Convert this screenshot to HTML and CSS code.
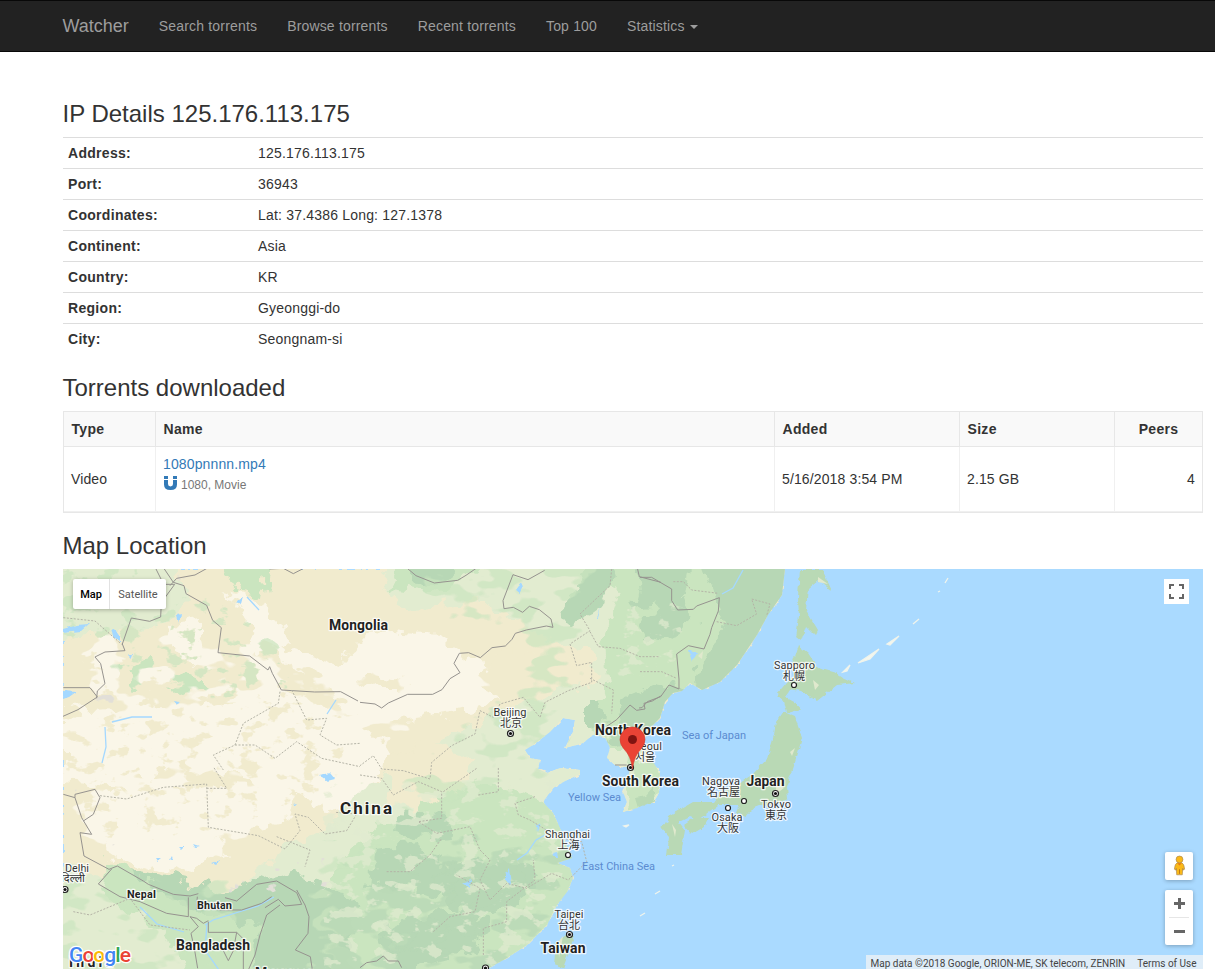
FILE: index.html
```html
<!DOCTYPE html>
<html lang="en">
<head>
<meta charset="utf-8">
<title>Watcher - IP Details</title>
<link rel="stylesheet" href="styles.css">
</head>
<body>
<nav class="navbar">
  <a class="brand">Watcher</a>
  <a class="nav-link">Search torrents</a>
  <a class="nav-link">Browse torrents</a>
  <a class="nav-link">Recent torrents</a>
  <a class="nav-link">Top 100</a>
  <a class="nav-link">Statistics <span class="caret"></span></a>
</nav>
<main class="container">
  <h3>IP Details 125.176.113.175</h3>
  <dl class="details">
    <div><dt>Address:</dt><dd>125.176.113.175</dd></div>
    <div><dt>Port:</dt><dd>36943</dd></div>
    <div><dt>Coordinates:</dt><dd>Lat: 37.4386 Long: 127.1378</dd></div>
    <div><dt>Continent:</dt><dd>Asia</dd></div>
    <div><dt>Country:</dt><dd>KR</dd></div>
    <div><dt>Region:</dt><dd>Gyeonggi-do</dd></div>
    <div><dt>City:</dt><dd>Seongnam-si</dd></div>
  </dl>
  <h3>Torrents downloaded</h3>
  <div class="torrents">
    <div class="row head"><span>Type</span><span>Name</span><span>Added</span><span>Size</span><span class="peers">Peers</span></div>
    <div class="row body">
      <span>Video</span>
      <div class="file">
        <a>1080pnnnn.mp4</a>
        <small><svg class="magnet" viewBox="0 0 13 14"><path d="M0 0h4v3H0zM9 0h4v3H9zM0 4h4v4q0 2.4 2.5 2.4T9 8V4h4v4.500q0 5.500-6.500 5.500T0 8.500z" fill="#337ab7"/></svg>1080, Movie</small>
      </div>
      <span>5/16/2018 3:54 PM</span><span>2.15 GB</span><span class="count">4</span>
    </div>
  </div>
  <h3>Map Location</h3>
  <section class="map">
    <svg class="canvas" viewBox="63 569 1140 400">
      <defs>
        <filter id="rough" x="-5%" y="-5%" width="110%" height="110%"><feTurbulence type="fractalNoise" baseFrequency=".06" numOctaves="3" seed="4"/><feDisplacementMap in="SourceGraphic" scale="26" xChannelSelector="R" yChannelSelector="G"/></filter>
        <filter id="coast" x="-5%" y="-5%" width="110%" height="110%"><feTurbulence type="fractalNoise" baseFrequency=".16" numOctaves="2" seed="8"/><feDisplacementMap in="SourceGraphic" scale="5" xChannelSelector="R" yChannelSelector="G"/></filter>
        <filter id="blotch" x="0" y="0" width="100%" height="100%"><feGaussianBlur in="SourceAlpha" stdDeviation="14" result="soft"/><feTurbulence type="fractalNoise" baseFrequency=".025 .045" numOctaves="3" seed="11"/><feComposite in2="soft" operator="arithmetic" k2="1" k3=".4"/><feColorMatrix values="0 0 0 0 0  0 0 0 0 0  0 0 0 0 0  0 0 0 18 -16.400"/><feComposite in="SourceGraphic" operator="in"/></filter>
        <filter id="fleck" x="0" y="0" width="100%" height="100%"><feGaussianBlur in="SourceAlpha" stdDeviation="6" result="soft"/><feTurbulence type="fractalNoise" baseFrequency=".05 .075" numOctaves="4" seed="23"/><feComposite in2="soft" operator="arithmetic" k2="1" k3=".35"/><feColorMatrix values="0 0 0 0 0  0 0 0 0 0  0 0 0 0 0  0 0 0 14 -13"/><feComposite in="SourceGraphic" operator="in"/></filter>
        <path id="mainland" d="M63 569H785L782 595 768 615 757 635 737 665 720 682 702 690 690 683 682 691 673 693 665 702 660 718 650 728 642 742 650 757 660 773 659 793 653 803 645 803 637 808 623 812 627 802 623 792 628 778 630 768 615 765 607 758 610 748 605 737 593 735 583 743 565 748 573 732 575 720 563 718 550 732 533 745 525 750 530 758 540 760 538 769 547 773 560 768 580 770 580 774 567 780 553 788 543 802 553 813 560 828 567 848 572 858 557 863 570 868 573 878 567 892 557 905 547 925 527 945 507 958 487 969H63Z"/>
        <clipPath id="land"><use href="#mainland"/></clipPath>
      </defs>
      <path class="sea" d="M63 569H1203V969H63Z"/>
      <g filter="url(#coast)"><use href="#mainland" class="sand"/></g>
      <g clip-path="url(#land)">
        <g filter="url(#rough)">
          <path class="cream" d="M172 625l28-4 8 32-14 12-25-15zM225 590l35 10 30 40-30 15-10-30zM255 640l60 15 55 20 38 20-30 3-80-22zM370 630l70 4 20 20 35 15 5 30-30 10-60 10-60-5-30-30zM63 712l100-4 85-10 40-10 70 35 30 20-15 60-50 5-50-25-100-18-50 22-60-5zM90 795l60-5 90-5 50 8-5 30-60 15-60 5-50-10zM100 835l60-12 50 10 20 20-60 22-60-20z"/>
          <path class="pale" d="M420 556H800V990H380L300 970 240 890 290 840 330 830 360 790 410 760 450 735 500 715 540 690 580 680 590 650 530 630 480 600 400 610 380 569zM50 855l120 55 80 30 60 50H50zM50 559h113l30 40-20 20-60 15-63 5z"/>
          <path class="sand" d="M500 650l60 10 40 18-50 17-40 10-35-20zM385 760l50-20 40 20-20 55-25 5-40-20zM375 675l35 5 0 12-30 0-20-10z"/>
          <path class="green" d="M400 560h90l-50 36-50-6zM580 560h220v190H610l-25-28 25-35-5-50 15-45zM340 860l45-40 80-10 80-12 40 80-70 110H330l-20-70zM425 805l65-22 70 20 20 50-50 60-70-20-40-40zM110 860l80 40 90 20 60-35 35 100H200l-40-60-60-30zM225 560h45l-5 36-30-5zM110 665l40-5 25 20-40 8zM130 672l60 5 25 12-30 8zM635 740l28 35-10 35-30 5z"/>
          <path class="wood" d="M410 560h60l-35 26-25-3zM560 615l30-55h28l-16 45-36 26zM640 560h50l-5 31-20 13-32 5zM700 560h105l-40 84-50 58-25-15 35-60zM660 600l25-5 10 25-30 20-25-5zM620 700l35-15 40 8-30 45-35-10zM585 705l20 0-3 18-17 5zM245 883l50-15 60 35-5 80H250l10-58-50-10zM395 815l55 2 3 18-40 2-20-5zM372 848l50-5 20 20 30 7-35 30-40-15-30 5zM445 865l60-5 40 10-20 30-60 20-20-20zM380 930l60-20 50 10-10 30-50 10-40 20zM130 870l90 20 60 20-5 10-90-12zM640 690l25 7-40 50-20-5z"/>
        </g>
        <path class="cream" filter="url(#blotch)" d="M80 620H190L350 660 480 640 510 700 350 760 350 790 240 850 63 850Z"/>
        <path class="sand" filter="url(#fleck)" d="M40 640L200 610 350 680V780L200 840H40Z"/>
        <path class="green faint" filter="url(#blotch)" d="M390 540H600L590 700 540 800 450 820 370 800 470 710 520 650 400 600ZM40 870H240V999H40ZM300 840H420V999H300Z"/>
        <path class="green faint" filter="url(#fleck)" d="M50 560H150L280 640 310 690 200 700 110 650 50 640Z"/>
        <path class="wood faint" filter="url(#blotch)" d="M340 850L590 820V999H300Z"/>
        <path class="pale faint" filter="url(#fleck)" d="M320 780H570V969H320ZM620 600H700L670 680H610Z"/>
        <path class="rock" filter="url(#fleck)" d="M90 692H120V706H90ZM160 560H190V585H160ZM63 785L75 790 90 840 150 870 230 895 280 895 300 870 280 860 240 890 150 862 105 840 80 785ZM290 845H330V895H290ZM235 870H265V890H235Z"/>
      </g>
      <g class="island" filter="url(#coast)">
        <path d="M800 569h22l10 22-14-11-10 8-2 22 12 20-3 6-9-9-5 14-5-4 3-20-1-20zM798 645l10 8 10 15 18 5 6 4 13 6-18 2-20 16-17-10-9-2-6 8 11 6 5 6-14 4-3-12-7-6 10-12 7-8-3-8zM783 712l12 5 7 21-8 28-7 21 1 12-15 6-14 0-5 2-8 10-10-4 3-8-21 0-20 15-8-3-12 6-11 2 2-9 24-14 21 0 8-11 12-4 18-12 15-16 7-24 2-13zM684 825l10-7 15 0-5 9-12 7zM676 818l9 12-4 25-14 0 2-18-9-10 8-5z"/>
        <path d="M571 931l3 8-11 29-9-3 2-22zM635 798l10-2 9-10 0 15-16 7z"/>
      </g>
      <g class="valley"><path d="M818 577l10 7-10-2zM813 680l6 5-4 5zM672 824l4 6-1 7zM790 752l5-4-3 8zM776 784l8 4-8 6zM698 656l5-5-1 8zM558 942l5-6-4 22z"/></g>
      <path class="islets" d="M843 672l7-7-3 6zM858 663l21-14-9 10zM887 644l12-8-9 9zM913 624l6-5zM624 826l5-1-3 2zM640 916l5-3zM655 894l5-3zM945 583l3-5zM938 592l2-1zM672 866l2-1z"/>
      <g class="water" filter="url(#coast)"><path d="M63 629l14-4 12-1-8 7-18 2zM111 628l9 6 0 9-7-6zM63 691l13 1-7 5-6 2zM236 602l7-6-2 8zM177 616l4-1-2 8zM173 700l8 1-5 3zM516 590l5-7 3 3-4 7zM596 618l4-12-3 12zM689 651l8 2-5 8zM319 775l11-2 5 6-8 2zM211 863l9-3-5 5zM155 858l6 0-4 3zM169 860l3-5 1 4zM178 847l6 0-3 3zM193 844l6 2-4 1zM292 804l6-1-3 3zM128 655l4 0-1 3zM536 826l4-4-3 10zM553 853l4-1 1 5-4 0zM506 872l3-4 2 17-5-2zM463 883l8-3-1 8z"/></g>
      <g class="river"><path d="M205 925l8-5 45-14 16-9M207 924l-2 26 14 20M140 907l17 17 27 8M336 700l-9 14M247 597l12 13M722 594l11-6 10-18M510 885l-4-13M545 835l-9 5-9 13-10 7M105 727l1 20-4 16M112 722l20-5 20 0"/></g>
      <g class="borders">
        <g transform="translate(60 565) scale(.33333)"><path d="M10 368l80 0 22 28-58 38-45 20M110 400l2-22 23-22-13-60-17-20 30-15 60-4-8-20 27-78 55 10 33-13 2-43 40-55-33 0-25-50M305 0l35 52 32 10 6 24 62 35 18 45 26 22-10 75 95 10 55 42 5-10 8 20 27 50 100 6 78-1 52 28M330 62l20-22 55-10 45-25M605 0l25 12 40-2 30 16 35-18"/></g>
        <g transform="translate(360 565) scale(.33333)"><path d="M0 412l45 5 20 12 20-15 58-26 75 0 28-14 24-33 30-18-18-28 16-30 28-2 35 15 35-30 40-5 20-20 10-18 33-10 60-12 20 4-6-25-35-28-30-10-20 18-28-15-28 4-3-24 30-78 45 15 50-28M130 0l38 32 55 22 70-8 25-15 45-31M830 0l8 35 65 17M740 484l30-20 40-44 20 16 25-4-3-17 25-7 25-15M765 600l35 0"/></g>
        <g transform="translate(640 565) scale(.33333)"><path d="M0 37h35l60 35 0 35 18 28 47-2 10-10 68-25-3 40-20 50-5 20-18 44-47-10-35 25 7 75 0 30-30-12-25 35-40 15-16 18-9 1"/></g>
        <g transform="translate(60 765) scale(.33333)"><path d="M10 88l35 10 20 60 30 50-35-5 12 70 75 40 25-10 78 45 15 10 75 30 50 5 25-7M155 312l-40 45 65 38 60 15 80 35 65 10 0-58M425 430l60 5 60 0 60-20 30-20M412 395l-3 40M390 455l20 5 20 15 15-8M390 455l25 30-22 20 10 45 10 60M445 470v32l85 0-10 55-15 30-15-30M530 502l20 20 0 90M660 420l-40 30-20 60-15 60-20 45M495 398l35 10 60-50 60-10 60 35 15 35-50 5-20-20-40 25M710 375l25 45 12 35-3 50-38 50 45 20 10 65M45 98l0-10 60-15 15 25-20 50-30 20"/></g>
        <g transform="translate(360 765) scale(.33333)"><path d="M0 608l20-15 30-5 20-15 15 15 30 0 10 20"/></g>
      </g>
      <g class="provinces">
        <g transform="translate(60 565) scale(.33333)"><path d="M10 158l95 10 80 70M660 380l-5 35-105 60-25 65-65 30 30 45M695 375l45 90 60-5-20 50 50 30 70-5M525 540l60 0 60 40 65-50 75 50 115 25"/></g>
        <g transform="translate(360 565) scale(.33333)"><path d="M755 12l-5 50-90 85 30 50-60 40 20 65 45-10 0 60-70 25-70 35-15 45-50-60-70 20-20 40-40-20-15 70-70 35-60 50-5 50-80-25-65-5-25-40-40 30M690 200l25 45 65 5 60 25 60 0M690 340l70 35-5 70"/></g>
        <g transform="translate(640 565) scale(.33333)"><path d="M100 50l30 0 25 25 80 10M230 170l60 12 60-35-15-45 55 15-10 35M0 320l65 0 45 20"/></g>
        <g transform="translate(60 765) scale(.33333)"><path d="M120 92l80 10 110-35 130-10 5 130 150 25 80 40 45-55-15-50 40 10 50 50 65-10 30-50-65-5M440 70l60 0-40-65M650 215l100 40-15 50M40 440l50 10 120-50 60 80 120 15"/></g>
        <g transform="translate(360 765) scale(.33333)"><path d="M0 30l65 10 35 50 75-40 70 30 0 80-70 10 55 35 100-20 30 70 30 30-30 60 30 60 50-50 60 15 75-45 50 20 55-55-15-60-65-10-90-55-35-15-10-35 60-20M80 320l70 0 60-50 35-50M220 500l50-45 75-15 15-70-70-40M370 570l0-80 70-20 0-60 85-65-5-60M250 80l100-70M355 90l60-10 0-75"/></g>
      </g>
      <g class="dots"><circle cx="794" cy="685" r="2.500"/><circle cx="744" cy="801" r="2.500"/><circle cx="728" cy="808" r="2.500"/><circle cx="568" cy="855" r="2.500"/><circle cx="510.500" cy="733.500" r="3"/><circle cx="630.500" cy="767.500" r="3"/><circle cx="775.500" cy="793.500" r="3"/><circle cx="569.500" cy="934.500" r="3"/><circle cx="485.500" cy="968" r="3"/><circle cx="65" cy="889.500" r="3"/></g>
      <g class="cores"><circle cx="510.500" cy="733.500" r="1.600"/><circle cx="630.500" cy="767.500" r="1.600"/><circle cx="775.500" cy="793.500" r="1.600"/><circle cx="569.500" cy="934.500" r="1.600"/><circle cx="485.500" cy="968" r="1.600"/><circle cx="65" cy="889.500" r="1.600"/></g>
      <g class="country">
        <text x="358.500" y="630" textLength="59">Mongolia</text><text class="china" x="366" y="814" textLength="52">China</text>
        <text x="633" y="735" textLength="76">North Korea</text><text x="640.500" y="786" textLength="77">South Korea</text><text x="765.500" y="786" textLength="38">Japan</text>
        <text x="563" y="953" textLength="45">Taiwan</text><text x="213" y="950" textLength="74">Bangladesh</text>
        <text class="minor" x="141.500" y="898" textLength="29">Nepal</text><text class="minor" x="214.500" y="909" textLength="35">Bhutan</text>
        <text x="91" y="967" textLength="44">India</text><text x="284" y="978" textLength="58">Myanmar</text>
      </g>
      <g class="city">
        <text x="510" y="716" textLength="33">Beijing</text><text class="cjk" x="511" y="727">北京</text>
        <text x="794.500" y="669" textLength="41">Sapporo</text><text class="cjk" x="794" y="680">札幌</text>
        <text x="721" y="785" textLength="38">Nagoya</text><text class="cjk" x="723.500" y="796">名古屋</text>
        <text x="727" y="821" textLength="31">Osaka</text><text class="cjk" x="728" y="832">大阪</text>
        <text x="776" y="808" textLength="30">Tokyo</text><text class="cjk" x="776" y="819">東京</text>
        <text x="567.500" y="838" textLength="45">Shanghai</text><text class="cjk" x="568.500" y="849">上海</text>
        <text x="569" y="918" textLength="29">Taipei</text><text class="cjk" x="569" y="929">台北</text>
        <text x="648" y="750" textLength="28">Seoul</text><text class="cjk" x="645" y="761">서울</text>
        <text x="77" y="872" textLength="24">Delhi</text><text x="73" y="882">दिल्ली</text>
      </g>
      <g class="seas"><text x="714" y="739" textLength="64">Sea of Japan</text><text x="594.500" y="801" textLength="53">Yellow Sea</text><text x="618.500" y="870" textLength="73">East China Sea</text></g>
      <path class="pin" d="M632.500 769Q631 756 624 749Q620 744.500 620 739.500A12.500 12.500 0 0 1 645 739.500Q645 744.500 641 749Q634 756 632.500 769Z"/><circle class="pin-core" cx="632.500" cy="739.500" r="4.500"/>
      <text class="google" x="69" y="962" textLength="62"><tspan fill="#4285f4">G</tspan><tspan fill="#ea4335">o</tspan><tspan fill="#fbbc05">o</tspan><tspan fill="#4285f4">g</tspan><tspan fill="#34a853">l</tspan><tspan fill="#ea4335">e</tspan></text>
    </svg>
    <div class="types"><b>Map</b><span>Satellite</span></div>
    <div class="full"><svg viewBox="0 0 15 15"><path d="M1 5V1h4M10 1h4v4M14 10v4h-4M5 14H1v-4"/></svg></div>
    <div class="tools">
      <div class="person"><svg viewBox="0 0 14 22"><path d="M4.500 8Q2 9 1.500 15l2 1v-2l.500 7h6l.500-7v2l2-1Q12 9 9.500 8Z" fill="#fbb917" stroke="#a98650" stroke-width=".7"/><circle cx="7" cy="4.500" r="3.700" fill="#fbb917" stroke="#a98650" stroke-width=".7"/><path d="M4.500 8.500h5L7 11z" fill="#e57816"/><path d="M7 15v5" stroke="#b87516"/></svg></div>
      <div class="zoom"><svg viewBox="0 0 28 55"><path d="M9 13.500h11M14.500 8v11M9 41.500h11" stroke="#666" stroke-width="3"/><path d="M4 27.500h20" stroke="#e6e6e6"/></svg></div>
    </div>
    <div class="credits"><span>Map data ©2018 Google, ORION-ME, SK telecom, ZENRIN</span><span>Terms of Use</span></div>
  </section>
</main>
</body>
</html>
```
FILE: styles.css
```css
* { box-sizing: border-box; }
body { margin: 0; font: 14px/20px "Liberation Sans", Arial, sans-serif; color: #333; background: #fff; }
.navbar { height: 52px; display: flex; gap: 30px; padding: 15px 0 0 62.5px; background: #222; border: solid #080808; border-width: 1px 0; color: #9d9d9d; }
.brand { font-size: 18px; }
.nav-link { letter-spacing: .17px; }
.caret { display: inline-block; margin-left: 1px; vertical-align: middle; border: 4px solid transparent; border-top-color: #9d9d9d; border-bottom: 0; }
.container { width: 1140px; margin: 49px 0 0 63px; }
h3 { margin: 0; height: 36px; font-size: 24px; line-height: 26px; font-weight: 500; text-indent: -.5px; }
.details { margin: 0 0 21px; }
.details div { display: grid; grid-template-columns: 190px 1fr; height: 31px; padding: 5px; border-top: 1px solid #ddd; }
dt { font-weight: bold; letter-spacing: .3px; }
dd { margin: 0; letter-spacing: .19px; }
.torrents { height: 102px; margin-bottom: 20px; border: 1px solid #e7e7e7; letter-spacing: .13px; }
.row { display: grid; grid-template-columns: 92px 619px 185px 155px 1fr; }
.row > * { display: flex; align-items: center; padding: 0 7px; border-right: 1px solid #f0f0f0; }
.row > *:last-child { border-right: 0; }
.head { height: 35px; font-weight: bold; background: #f9f9f9; border-bottom: 1px solid #e7e7e7; letter-spacing: .3px; }
.head > * { padding-left: 7.5px; border-color: #e7e7e7; }
.body { height: 65px; border-bottom: 1px solid #f0f0f0; }
.row .peers { padding: 0; justify-content: center; }
.row .count { justify-content: flex-end; }
.row .file { display: block; padding-top: 7px; }
.file a { display: block; color: #337ab7; }
.file small { display: flex; align-items: center; gap: 4.500px; padding-top: 1px; color: #777; font-size: 12px; letter-spacing: 0; }
.magnet { width: 13px; height: 14px; margin: -4px 0 0 .5px; }
.map { position: relative; height: 400px; overflow: hidden; font-family: Roboto, sans-serif; }
.canvas { display: block; width: 1140px; height: 400px; }
.sea { fill: #aadaff; }
.sand { fill: #f1ebce; }
.cream { fill: #faf6e8; }
.pale { fill: #e2ecd0; }
.green { fill: #cae5bf; }
.wood { fill: #b7d7b5; }
.faint { opacity: .7; }
.rock { fill: #e2dfd8; }
.island { fill: #b9d9b5; }
.valley { fill: #e0e9cd; }
.islets { fill: #f5f7ee; stroke: #f0f4ec; stroke-width: 1.3; }
.water { fill: #a4d8ff; }
.river { fill: none; stroke: #a4d8ff; stroke-width: 1.3; }
.borders, .provinces { fill: none; stroke: #96938f; stroke-linejoin: round; }
.borders path { vector-effect: non-scaling-stroke; }
.provinces path { vector-effect: non-scaling-stroke; stroke: #b4b3a6; stroke-dasharray: 2 1.5; }
.dots { fill: #fff; stroke: #222; stroke-width: 1.2; }
.cores { fill: #111; }
.canvas text { text-anchor: middle; paint-order: stroke; stroke: #ffffffcc; stroke-width: 2.5px; stroke-linejoin: round; }
.country text { font: 700 14px Roboto, sans-serif; fill: #222; }
.country .china { font-size: 17px; }
.country .minor { font-size: 11px; }
.city text { font: 11px Roboto, "Noto Sans", sans-serif; fill: #333; }
.city .cjk { font-family: "Noto Sans CJK JP", "Noto Sans CJK KR", sans-serif; }
.seas text { font: 11px Roboto, sans-serif; fill: #5b8bd0; stroke: none; }
.pin { fill: #ea4335; stroke: #d23a2e; stroke-width: .6; }
.pin-core { fill: #811411; }
.canvas .google { font: 500 21px Roboto, sans-serif; text-anchor: start; stroke: #fff; }
.types { position: absolute; left: 10px; top: 10px; display: flex; height: 30px; border-radius: 2px; background: #fff; box-shadow: 0 1px 4px #0004; font-size: 11px; line-height: 31px; color: #565656; }
.types b { width: 37px; text-align: center; font-weight: 500; color: #000; border-right: 1px solid #e2e2e2; }
.types span { width: 56px; text-align: center; }
.full { position: absolute; left: 1101px; top: 10px; display: grid; place-items: center; width: 25px; height: 25px; background: #fff; }
.full svg { width: 15px; height: 15px; fill: none; stroke: #666; stroke-width: 2; }
.tools { position: absolute; left: 1102px; top: 283px; display: grid; gap: 10px; }
.person, .zoom { width: 28px; height: 28px; background: #fff; border-radius: 2px; box-shadow: 0 1px 4px #0004; }
.person { display: grid; place-items: start center; padding-top: 3px; }
.person svg { width: 13px; height: 21px; }
.zoom { height: 55px; }
.zoom svg { display: block; width: 28px; height: 55px; }
.credits { position: absolute; right: 0; bottom: 0; display: flex; justify-content: space-between; width: 337px; height: 14px; padding: 0 6.5px 0 4.5px; background: #f5f5f5b3; color: #444; font-size: 10px; line-height: 17px; white-space: nowrap; }
```
